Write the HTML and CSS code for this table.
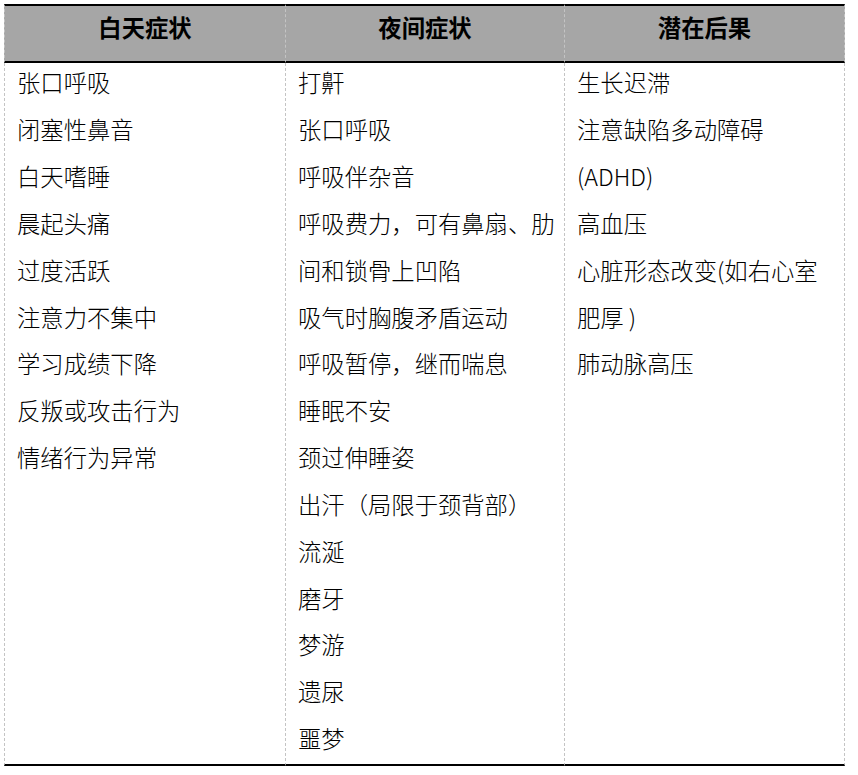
FILE: index.html
```html
<!DOCTYPE html>
<html lang="zh-CN">
<head>
<meta charset="utf-8">
<title>症状表</title>
<link rel="stylesheet" href="styles.css">
</head>
<body>
<table class="sym-table">
  <colgroup>
    <col class="c1">
    <col class="c2">
    <col class="c3">
  </colgroup>
  <thead>
    <tr>
      <th>白天症状</th>
      <th>夜间症状</th>
      <th>潜在后果</th>
    </tr>
  </thead>
  <tbody>
    <tr>
      <td>
        <div class="list">
          <p>张口呼吸</p>
          <p>闭塞性鼻音</p>
          <p>白天嗜睡</p>
          <p>晨起头痛</p>
          <p>过度活跃</p>
          <p>注意力不集中</p>
          <p>学习成绩下降</p>
          <p>反叛或攻击行为</p>
          <p>情绪行为异常</p>
        </div>
      </td>
      <td>
        <div class="list">
          <p>打鼾</p>
          <p>张口呼吸</p>
          <p>呼吸伴杂音</p>
          <p>呼吸费力，可有鼻扇、肋间和锁骨上凹陷</p>
          <p>吸气时胸腹矛盾运动</p>
          <p>呼吸暂停，继而喘息</p>
          <p>睡眠不安</p>
          <p>颈过伸睡姿</p>
          <p>出汗（局限于颈背部）</p>
          <p>流涎</p>
          <p>磨牙</p>
          <p>梦游</p>
          <p>遗尿</p>
          <p>噩梦</p>
        </div>
      </td>
      <td>
        <div class="list">
          <p>生长迟滞</p>
          <p>注意缺陷多动障碍(ADHD)</p>
          <p>高血压</p>
          <p>心脏形态改变(如右心室肥厚 )</p>
          <p>肺动脉高压</p>
        </div>
      </td>
    </tr>
  </tbody>
</table>
</body>
</html>
```
FILE: styles.css
```css
html, body {
  margin: 0;
  padding: 0;
  background: #ffffff;
}

body {
  font-family: "Noto Sans CJK SC", "Noto Sans", sans-serif;
  font-size: 23.33px;
  font-weight: 300;
  color: #000000;
}

.sym-table {
  margin: 4px 0 0 4px;
  width: 841px;
  table-layout: fixed;
  border-collapse: separate;
  border-spacing: 0;
}

.c1 { width: 281px; }
.c2 { width: 279px; }
.c3 { width: 281px; }

.sym-table th {
  background: #a6a6a6;
  font-weight: 700;
  text-align: center;
  line-height: 43px;
  padding: 0 0 12px 0;
  border-top: 2px solid #000000;
  border-bottom: 2px solid #000000;
  border-left: 1px dashed #c4c4c4;
}

.sym-table th:last-child,
.sym-table td:last-child {
  border-right: 1px dashed #c4c4c4;
}

.sym-table td {
  vertical-align: top;
  text-align: left;
  padding: 0 6px 2px 12px;
  border-left: 1px dashed #c4c4c4;
  border-bottom: 2px solid #000000;
}

.sym-table td:last-child {
  padding-right: 8px;
}

.list {
  margin-top: -3.7px;
}

.list p {
  margin: 0;
  line-height: 46.85px;
}
```
